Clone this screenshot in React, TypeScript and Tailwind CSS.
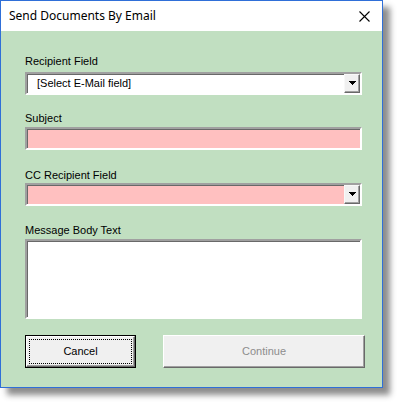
import type { ReactNode } from 'react'

const uiFont = { fontFamily: '"Liberation Sans", Arial, sans-serif' }

function FieldLabel({ children, className = '' }: { children: ReactNode; className?: string }) {
  return <div className={`h-[14px] text-[11px] leading-[14px] text-black ${className}`}>{children}</div>
}

function DropArrow() {
  return (
    <div className="flex h-full w-[16px] items-center justify-center border border-[#f8f8f8] border-b-[#696969] border-r-[#696969] bg-[#f0f0f0] shadow-[inset_-1px_-1px_0_#a0a0a0]">
      <svg width="7" height="5" viewBox="0 0 7 5">
        <path d="M0 0h7v1H0zM1 1h5v1H1zM2 2h3v1H2zM3 3h1v1H3z" fill="#000" />
      </svg>
    </div>
  )
}

function Sunken({ className = '', children }: { className?: string; children?: ReactNode }) {
  return (
    <div className={`flex items-stretch border-2 border-[#a0a0a0] border-b-white border-r-white shadow-[inset_1px_1px_0_#696969] ${className}`}>
      {children}
    </div>
  )
}

export default function App() {
  return (
    <div className="h-[404px] w-[398px] bg-white" style={uiFont}>
      <div className="flex h-[388px] w-[383px] flex-col border border-[#2f6fd8] bg-white shadow-[7px_7px_6px_rgba(0,0,0,0.45)]">
        {/* Title bar */}
        <div className="flex h-[30px] shrink-0 items-center justify-between pl-[8px] pr-[9px]">
          <span className="text-[12px] text-black" style={{ fontFamily: '"Noto Sans", "Open Sans", sans-serif' }}>
            Send Documents By Email
          </span>
          <svg width="11" height="11" viewBox="0 0 11 11" className="mr-[3px]">
            <path d="M0.5 0.5L10.5 10.5M10.5 0.5L0.5 10.5" stroke="#000" strokeWidth="1.1" />
          </svg>
        </div>

        {/* Body */}
        <div className="flex flex-1 flex-col bg-[#c1dfc1] pl-[24px] pr-[20px] pt-[23px]">
          <FieldLabel>Recipient Field</FieldLabel>
          <Sunken className="mt-[4px] h-[23px] bg-white">
            <div className="flex flex-1 items-center pl-[10px] text-[11px] text-black">[Select E-Mail field]</div>
            <DropArrow />
          </Sunken>

          <FieldLabel className="mt-[16px]">Subject</FieldLabel>
          <Sunken className="mt-[2px] h-[23px] bg-[#ffc0c0]" />

          <FieldLabel className="mt-[18px]">CC Recipient Field</FieldLabel>
          <Sunken className="mt-[1px] h-[23px] bg-[#ffc0c0]">
            <div className="flex-1" />
            <DropArrow />
          </Sunken>

          <FieldLabel className="mt-[17px]">Message Body Text</FieldLabel>
          <Sunken className="mt-[2px] h-[80px] bg-white" />

          <div className="mt-[16px] flex h-[33px] justify-between pr-[-3px]">
            <button className="h-full w-[111px] border border-black bg-[#f0f0f0] p-0">
              <div className="flex h-full w-full items-center justify-center border border-white border-b-[#696969] border-r-[#696969] p-[2px] shadow-[inset_-1px_-1px_0_#a0a0a0]">
                <div className="flex h-full w-full items-center justify-center border border-dotted border-black text-[11px] text-black">
                  Cancel
                </div>
              </div>
            </button>
            <button className="-mr-[3px] h-full w-[202px] border border-white border-b-[#696969] border-r-[#696969] bg-[#f0f0f0] text-[11px] text-[#8d8d8d] shadow-[inset_-1px_-1px_0_#a0a0a0]">
              Continue
            </button>
          </div>
        </div>
      </div>
    </div>
  )
}
